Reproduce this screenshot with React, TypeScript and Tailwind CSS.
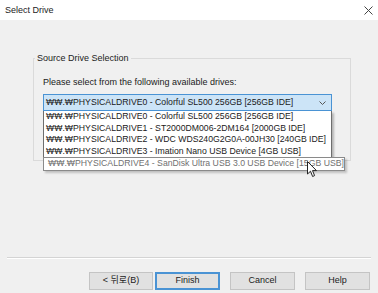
import React, { FC } from 'react';

const drives = [
  '₩₩.₩PHYSICALDRIVE0 - Colorful SL500 256GB [256GB IDE]',
  '₩₩.₩PHYSICALDRIVE1 - ST2000DM006-2DM164 [2000GB IDE]',
  '₩₩.₩PHYSICALDRIVE2 - WDC WDS240G2G0A-00JH30 [240GB IDE]',
  '₩₩.₩PHYSICALDRIVE3 - Imation Nano USB Device [4GB USB]',
];

const Cursor: FC = () => (
  <svg className="absolute left-[264px] top-[67px]" width="11" height="17" viewBox="0 0 11 17">
    <path d="M0.5 0.5 L0.5 13 L3.5 10.2 L5.6 15.5 L7.6 14.6 L5.5 9.6 L9.5 9.6 Z" fill="#fff" stroke="#222" strokeWidth="1" strokeLinejoin="round" />
  </svg>
);

const Button: FC<{ label: string; primary?: boolean; className?: string }> = ({ label, primary, className }) => (
  <div
    className={`flex h-[18px] items-center justify-center bg-[#e1e1e1] text-[9px] text-[#222] ${
      primary ? 'border-2 border-[#4a93d4]' : 'border border-[#c4c4c4]'
    } ${className ?? ''}`}
  >
    {label}
  </div>
);

const App: FC = () => {
  return (
    <div
      className="flex h-[293px] w-[378px] flex-col overflow-hidden bg-[#f0f0f0] text-[#1a1a1a]"
      style={{ fontFamily: '"Liberation Sans", "Noto Sans CJK KR", sans-serif' }}
    >
      <div className="flex h-[20px] items-center justify-between bg-white pl-[5px] pr-[5px]">
        <span className="text-[9px] leading-[10px] text-[#222]">Select Drive</span>
        <svg width="9" height="9" viewBox="0 0 9 9" className="mt-[1px]">
          <path d="M0.5 0.5 L8.5 8.5 M8.5 0.5 L0.5 8.5" stroke="#444" strokeWidth="1" />
        </svg>
      </div>

      <div className="flex flex-1 flex-col">
        <fieldset className="ml-[33px] mt-[33px] h-[108px] w-[318px] border border-[#dadada]">
          <legend className="ml-[1px] px-[2px] text-[9px] leading-[10px] text-[#222]">Source Drive Selection</legend>
          <div className="pl-[9px] pt-[14px]">
            <div className="whitespace-nowrap text-[9px] leading-[11px]">Please select from the following available drives:</div>
            <div className="relative mt-[6px] w-[289px]">
              <div className="flex h-[17px] items-center justify-between border border-[#4a93d4] bg-[#cce4f7] pl-[2px] pr-[5px]">
                <span className="whitespace-nowrap text-[8.7px] leading-[11px]">{drives[0]}</span>
                <svg width="7" height="4" viewBox="0 0 7 4">
                  <path d="M0.5 0.5 L3.5 3.5 L6.5 0.5" fill="none" stroke="#555" strokeWidth="1" />
                </svg>
              </div>
              <div className="absolute left-0 top-[17px] flex w-[289px] flex-col border border-t-0 border-[#6e6e6e] bg-white pl-[2px] shadow-[2px_2px_2px_rgba(0,0,0,0.25)]">
                {drives.map((d) => (
                  <div key={d} className="h-[11.5px] whitespace-nowrap text-[8.7px] leading-[11.5px]">
                    {d}
                  </div>
                ))}
              </div>
              <div className="absolute left-0 top-[63px] flex h-[14px] w-[302px] items-center whitespace-nowrap border border-[#8a8a8a] bg-white pl-[4px] text-[8.7px] text-[#707070] shadow-[2px_2px_2px_rgba(0,0,0,0.2)]">
                ₩₩.₩PHYSICALDRIVE4 - SanDisk Ultra USB 3.0 USB Device [15GB USB]
              </div>
              <Cursor />
            </div>
          </div>
        </fieldset>

        <div className="mx-[7px] mt-[96px] h-[2px] border-t border-b border-t-[#d4d4d4] border-b-white" />

        <div className="mt-[13px] flex justify-end pr-[8px]">
          <Button label="< 뒤로(B)" className="w-[64px]" />
          <Button label="Finish" primary className="ml-[2px] w-[65px]" />
          <Button label="Cancel" className="ml-[10px] w-[65px]" />
          <Button label="Help" className="ml-[10px] w-[65px]" />
        </div>
      </div>
    </div>
  );
};

export default App;
